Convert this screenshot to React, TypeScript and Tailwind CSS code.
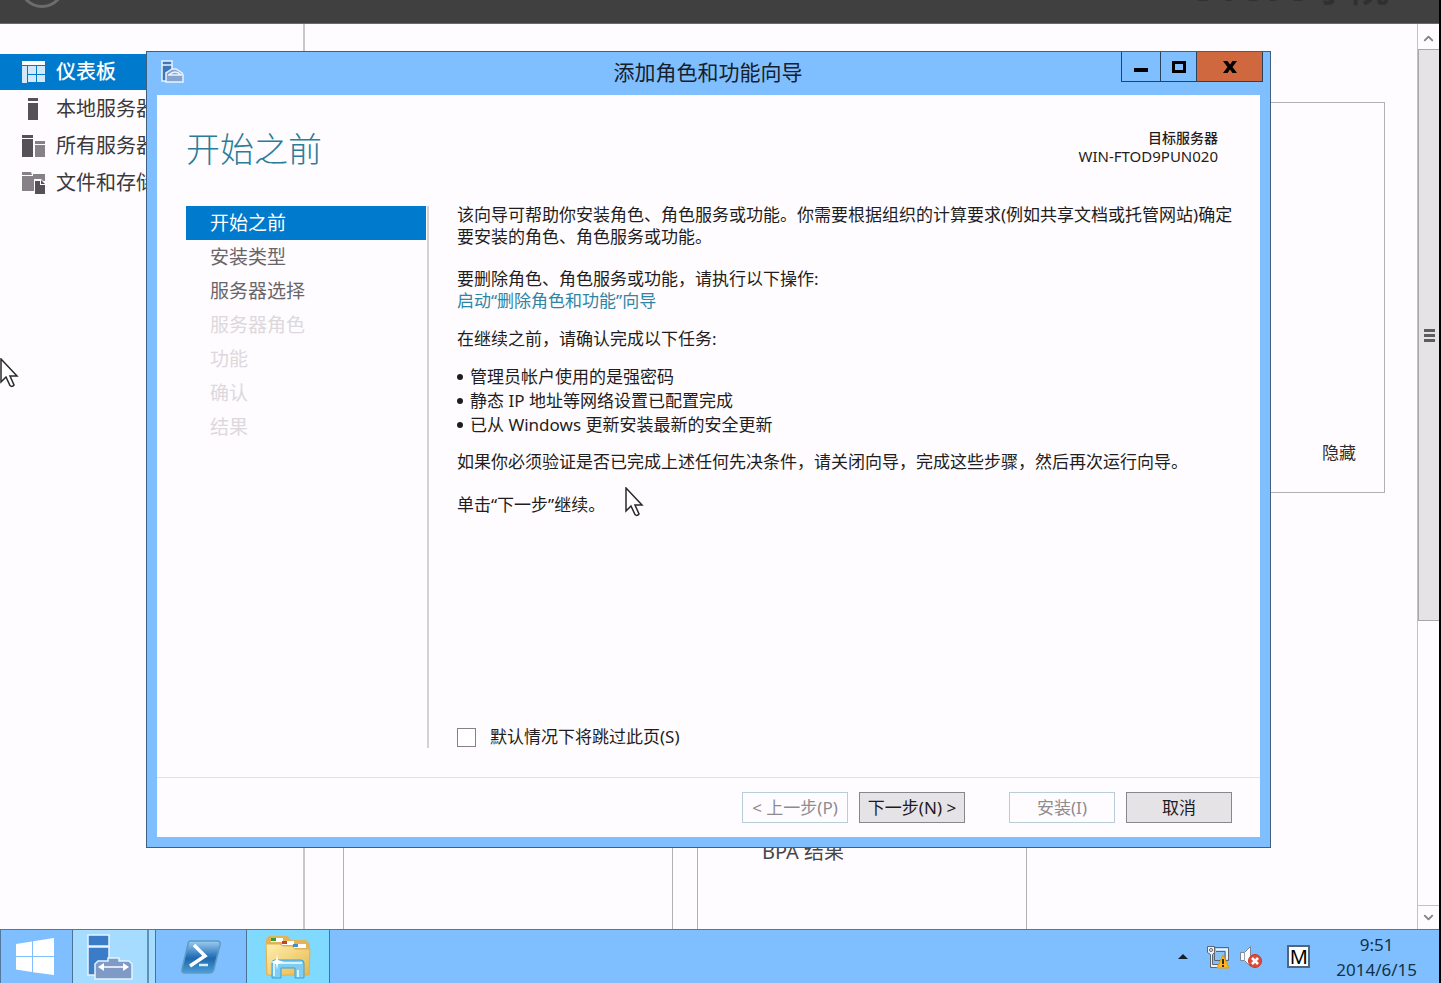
import React, { useState } from 'react';
import { ChevronDown, ChevronUp } from 'lucide-react';
import clsx from 'clsx';

type StepState = 'active' | 'ready' | 'disabled';

const steps: { label: string; state: StepState }[] = [
  { label: '开始之前', state: 'active' },
  { label: '安装类型', state: 'ready' },
  { label: '服务器选择', state: 'ready' },
  { label: '服务器角色', state: 'disabled' },
  { label: '功能', state: 'disabled' },
  { label: '确认', state: 'disabled' },
  { label: '结果', state: 'disabled' },
];

const tasks = [
  '管理员帐户使用的是强密码',
  '静态 IP 地址等网络设置已配置完成',
  '已从 Windows 更新安装最新的安全更新',
];

const DashboardIcon = () => (
  <svg width="24" height="24" viewBox="0 0 24 24" fill="#d3e9fb">
    <path fill="#fff" d="M1 1h23v4H1z" />
    <path d="M1 6h5v17H1zM7 6h8v8H7zM16 6h8v8h-8zM7 15h8v7H7zM16 15h8v7h-8z" />
  </svg>
);

const LocalServerIcon = () => (
  <svg width="24" height="24" viewBox="0 0 24 24" fill="#555156">
    <path d="M7 1h10v3H7zM7 6h10v17H7z" />
  </svg>
);

const AllServersIcon = () => (
  <svg width="24" height="24" viewBox="0 0 24 24">
    <path fill="#555156" d="M1 1h11v3H1zM1 5h11v18H1z" />
    <path fill="#858186" d="M14 7h10v3H14zM14 11h10v12H14z" />
  </svg>
);

const FilesIcon = () => (
  <svg width="24" height="24" viewBox="0 0 24 24">
    <path fill="#858186" d="M1 1h9l1 3H1zM1 5h11V3h12v7h-2l-2-2h-7v12H1z" />
    <path fill="#555156" d="M14 10h5v4h5v9H14zM20 9l4 4h-4z" />
  </svg>
);

const navItems = [
  { label: '仪表板', icon: <DashboardIcon />, active: true },
  { label: '本地服务器', icon: <LocalServerIcon /> },
  { label: '所有服务器', icon: <AllServersIcon /> },
  { label: '文件和存储服务', icon: <FilesIcon /> },
];

// Server tower with a toolbox in front
const ServerManagerIcon = () => (
  <svg width="46" height="46" viewBox="0 0 46 46" stroke="#e4f3ff" strokeWidth="1.500">
    <path fill="#3a7cc8" d="M1 1h21v11H1zM1 13h21v28H1z" />
    <path fill="#7f9ac6" d="M21 27v-3h11v3h10l3 3v15H8V30l3-3z" />
    <path fill="none" stroke="#fff" d="M14 33h25" />
    <path fill="#fff" stroke="none" d="M11 33l6-4v8zM42 33l-6-4v8z" />
  </svg>
);

const TitleIcon = () => (
  <svg width="24" height="24" viewBox="0 0 24 24" stroke="#e8f4ff" strokeWidth="1.500">
    <path fill="#3f76ba" d="M2 1h10v4H2zM2 5h10v16H2z" />
    <path fill="#86a4d0" d="M6 22v-9l6-4h4l6 4 1 2v7z" />
    <path fill="none" d="M9 15c4-4 8-4 12 0M8 15h14" />
  </svg>
);

const WindowsLogo = () => (
  <svg width="40" height="38" viewBox="0 0 40 38" fill="#fff" className="-ml-1">
    <path d="M1 6l16-2.500V18H1zM18 3.200L39 0v18H18zM1 19h16v15L1 31.500zM18 19h21v18l-21-2.800z" />
  </svg>
);

const PowerShellIcon = () => (
  <svg width="42" height="36" viewBox="0 0 42 36">
    <defs>
      <linearGradient id="ps" x1="0" y1="0" x2="0" y2="1">
        <stop offset="0" stopColor="#9dcdf0" />
        <stop offset="0.450" stopColor="#2f78bd" />
        <stop offset="0.550" stopColor="#1f68ad" />
        <stop offset="1" stopColor="#4a9fd8" />
      </linearGradient>
    </defs>
    <path fill="url(#ps)" stroke="#5b9cc4" strokeWidth="1.500" d="M10 2h27q4 0 3 4l-6 24q-1 4-5 4H5q-4 0-3-4L8 5q.5-3 2-3z" />
    <path fill="none" stroke="#fff" strokeWidth="3.500" d="M14 6l11 11-15 10" />
    <path stroke="#d6ecfa" strokeWidth="2.500" d="M19 26h9" />
  </svg>
);

const ExplorerIcon = () => (
  <svg width="48" height="46" viewBox="0 0 48 46">
    <defs>
      <linearGradient id="folder" x1="0" y1="0" x2="1" y2="1">
        <stop offset="0" stopColor="#fff0b0" />
        <stop offset="1" stopColor="#e5b84c" />
      </linearGradient>
    </defs>
    <path fill="#e2b458" d="M2 5l3-3h19l3 4h15l4 4v30H2z" />
    <path fill="#fff" d="M7 4h12v4H7zM18 7h12v4H18zM29 10h13v4H29z" />
    <path fill="#2f9e35" d="M7 4h5v3H7z" />
    <path fill="#c8402c" d="M18 7h5v3h-5z" />
    <path fill="#3f8fd0" d="M29 10h5v3h-5z" />
    <path fill="url(#folder)" stroke="#e0b050" d="M2 10h14l3 2h9l3 3h15l-1 26H3z" />
    <path fill="#7ecdf5" stroke="#3f9fd8" d="M8 29q0-3 3-3h26q3 0 3 3v15h-9V34H17v10H8z" />
    <path stroke="#d6f3ff" strokeWidth="2" d="M10 29h28M10 29v13M34 36v7" />
    <path fill="#fff" d="M13 20l1 6 6 2-6 2-1 6-1-6-5-2 5-2z" />
  </svg>
);

const NetworkIcon = () => (
  <svg width="24" height="24" viewBox="0 0 24 24">
    <path fill="#8cc2f0" stroke="#5c6470" d="M8.500 2.500h14v13h-14z" />
    <path fill="none" stroke="#eef4fa" strokeWidth="2" d="M10 4.500h11v10" />
    <path fill="none" stroke="#5c6470" d="M10 6.500h9v8" />
    <path fill="#eef2f6" stroke="#5c6470" d="M1.500 1.500h7v6l-2 2v10h8v3h-10v-13l-3-2z" />
    <circle cx="5" cy="5" r="1.500" fill="none" stroke="#5c6470" />
    <path fill="#ffb91c" stroke="#e09a10" d="M17 10l6 13H11z" />
    <path fill="#3a2b05" d="M16 14h2v5h-2zM16 20h2v2h-2z" />
  </svg>
);

const MutedIcon = () => (
  <svg width="24" height="24" viewBox="0 0 24 24">
    <path fill="#fafbfc" stroke="#7d8794" d="M1.500 7.500h4l6-6v20l-6-6h-4z" />
    <path stroke="#9aa3ae" d="M5.500 8v8" />
    <circle cx="16" cy="16" r="6.500" fill="#e04a38" stroke="#c23a2c" />
    <path stroke="#fff" strokeWidth="2.500" d="M13 13l6 6M19 13l-6 6" />
  </svg>
);

const MouseCursor = () => (
  <svg width="20" height="32" viewBox="0 0 20 32">
    <path
      fill="#fff"
      stroke="#2a282b"
      strokeWidth="1.500"
      d="M1 1v23l5-5 4 8.500q2 2 4-.5L10 18h7z"
    />
  </svg>
);

const WizardButton = ({ label, disabled }: { label: string; disabled?: boolean }) => (
  <button
    type="button"
    disabled={disabled}
    className={clsx(
      'flex h-[31px] w-[106px] items-center justify-center whitespace-nowrap border text-[17px] leading-5',
      disabled
        ? 'border-[#b9cdd6] bg-[#fefcff] text-[#8f8b90]'
        : 'border-[#8a878c] bg-[#e6e3e7] text-[#1c1b1d]'
    )}
  >
    {label}
  </button>
);

const Sidebar = () => (
  <nav className="w-[305px] shrink-0 border-r-2 border-[#cac7cb] pt-[30px]">
    <ul className="flex flex-col gap-px">
      {navItems.map((item) => (
        <li key={item.label}>
          <a
            href="#"
            className={clsx(
              'flex h-9 items-center gap-[11px] pl-[21px] text-[20px] leading-6',
              item.active ? 'bg-[#007acc] font-medium text-white' : 'text-[#3b393c]'
            )}
          >
            {item.icon}
            {item.label}
          </a>
        </li>
      ))}
    </ul>
  </nav>
);

const Scrollbar = () => (
  <div className="flex w-[22px] shrink-0 flex-col border-l border-[#c4c1c5] pt-[3px]">
    <button type="button" aria-label="向上滚动" className="flex h-[22px] items-center justify-center text-[#858186]">
      <ChevronUp size={15} strokeWidth={3} />
    </button>
    <div className="flex h-[572px] flex-col items-center justify-center gap-[2px] border border-r-0 border-[#aaa7ab] bg-[#e6e3e7]">
      <span className="h-[3px] w-[11px] bg-[#5f5c60]" />
      <span className="h-[3px] w-[11px] bg-[#5f5c60]" />
      <span className="h-[3px] w-[11px] bg-[#5f5c60]" />
    </div>
    <div className="flex-1" />
    <button type="button" aria-label="向下滚动" className="flex h-6 items-center justify-center border-t border-[#c4c1c5] text-[#858186]">
      <ChevronDown size={15} strokeWidth={3} />
    </button>
  </div>
);

const Dashboard = () => (
  <main className="flex min-w-0 flex-1 flex-col pt-[78px] pr-8 pl-[38px]">
    <section className="flex h-[391px] items-end justify-end border border-[#b3b0b4] pr-7 pb-[27px]">
      <button type="button" className="text-[17px] leading-6 text-[#2f2d30]">
        隐藏
      </button>
    </section>
    <div className="mt-32 flex flex-1 gap-6">
      <section className="w-[330px] border border-b-0 border-[#b3b0b4]" />
      <section className="w-[330px] border border-b-0 border-[#b3b0b4] pt-[218px] pl-16 text-[20px] leading-6 text-[#49464a]">
        BPA 结果
      </section>
    </div>
  </main>
);

const Wizard = () => {
  const [skip, setSkip] = useState(false);

  return (
    <div
      role="dialog"
      aria-labelledby="wizard-title"
      className="absolute top-[27px] right-[168px] bottom-[81px] left-[146px] flex flex-col border border-[#3e5f80] bg-[#80bfff] px-[10px] pb-[10px]"
    >
      <div className="relative flex h-[43px] shrink-0 items-center pb-1">
        <div className="pl-[3px]">
          <TitleIcon />
        </div>
        <h1 id="wizard-title" className="flex-1 pr-7 text-center text-[21px] leading-7 text-[#16202c]">
          添加角色和功能向导
        </h1>
        <div className="absolute top-0 -right-[3px] flex h-[30px] border border-t-0 border-[#27425e]">
          <button type="button" aria-label="最小化" className="flex w-[39px] items-center justify-center border-r border-[#27425e]">
            <svg width="14" height="14" viewBox="0 0 14 14">
              <path d="M0 8h14v4H0z" />
            </svg>
          </button>
          <button type="button" aria-label="最大化" className="flex w-9 items-center justify-center border-r border-[#27425e]">
            <svg width="14" height="12" viewBox="0 0 14 12">
              <path fill="none" stroke="#000" strokeWidth="3" d="M1.500 1.500h11v9h-11z" />
            </svg>
          </button>
          <button type="button" aria-label="关闭" className="flex w-[65px] items-center justify-center bg-[#d0683f]">
            <svg width="14" height="12" viewBox="0 0 14 12">
              <path d="M0 0h4.500L7 3.500 9.500 0H14L9.500 6l4.500 6H9.500L7 8.500 4.500 12H0l4.500-6z" />
            </svg>
          </button>
        </div>
      </div>

      <div className="flex flex-1 flex-col bg-[#fefcff]">
        <header className="flex justify-between pt-[34px] pr-[42px] pb-[35px] pl-[29px]">
          <h2 className="text-[34px] leading-10 font-light text-[#2b7c98]">开始之前</h2>
          <div className="text-right text-[#1f1d20]">
            <p className="text-[14px] leading-[18px] font-medium">目标服务器</p>
            <p className="text-[15px] leading-[18px]">WIN-FTOD9PUN020</p>
          </div>
        </header>

        <div className="flex flex-1 pb-[29px] pl-[29px]">
          <nav className="mt-[2px] w-[243px] shrink-0 border-r-2 border-[#d5d2d6] pr-px">
            <ol>
              {steps.map((step) => (
                <li
                  key={step.label}
                  className={clsx('h-[34px] pl-[24px] text-[19px] leading-[34px]', {
                    'bg-[#007acc] text-white': step.state === 'active',
                    'text-[#69666a]': step.state === 'ready',
                    'text-[#dcd8dc]': step.state === 'disabled',
                  })}
                >
                  {step.label}
                </li>
              ))}
            </ol>
          </nav>

          <div className="flex flex-1 flex-col pr-6 pl-7 text-[17px] leading-[22px] text-[#1f1d20]">
            <p>
              该向导可帮助你安装角色、角色服务或功能。你需要根据组织的计算要求(例如共享文档或托管网站)确定要安装的角色、角色服务或功能。
            </p>
            <p className="mt-5">
              要删除角色、角色服务或功能，请执行以下操作:
              <br />
              <a href="#" className="text-[#2f86a4]">
                启动“删除角色和功能”向导
              </a>
            </p>
            <p className="mt-4">在继续之前，请确认完成以下任务:</p>
            <ul className="mt-[15px] leading-6">
              {tasks.map((task) => (
                <li key={task} className="flex items-center gap-[7px]">
                  <span className="size-[6px] rounded-full bg-[#1f1d20]" />
                  {task}
                </li>
              ))}
            </ul>
            <p className="mt-[14px]">
              如果你必须验证是否已完成上述任何先决条件，请关闭向导，完成这些步骤，然后再次运行向导。
            </p>
            <p className="mt-[21px]">单击“下一步”继续。</p>

            <label className="mt-auto flex items-center gap-[14px]">
              <input
                type="checkbox"
                checked={skip}
                onChange={(e) => setSkip(e.target.checked)}
                className="size-[19px] appearance-none border border-[#858186] bg-white checked:bg-[#007acc]"
              />
              默认情况下将跳过此页(S)
            </label>
          </div>
        </div>

        <footer className="flex justify-end gap-[11px] border-t border-[#e6e0e5] pt-[14px] pr-7 pb-[14px]">
          <WizardButton label="< 上一步(P)" disabled />
          <WizardButton label="下一步(N) >" />
          <div className="ml-[33px]">
            <WizardButton label="安装(I)" disabled />
          </div>
          <WizardButton label="取消" />
        </footer>
      </div>
    </div>
  );
};

const Taskbar = () => (
  <footer className="flex h-[54px] shrink-0 border-t border-l border-[#54789c] bg-[#80bfff]">
    <button type="button" aria-label="开始" className="flex w-[71px] items-center justify-center">
      <WindowsLogo />
    </button>
    <button type="button" aria-label="服务器管理器" className="flex w-[84px] border-x border-[#4a7396] bg-[#a6dcff]">
      <span className="flex h-full flex-1 items-center justify-center border-r-2 border-[#5f91b4]">
        <ServerManagerIcon />
      </span>
      <span className="w-[6px]" />
    </button>
    <button type="button" aria-label="PowerShell" className="flex w-[90px] items-center justify-center">
      <PowerShellIcon />
    </button>
    <button type="button" aria-label="文件资源管理器" className="flex w-[84px] items-center justify-center border-x border-[#4a7396] bg-[#80daff]">
      <ExplorerIcon />
    </button>
    <div className="ml-auto flex items-center pr-[22px]">
      <svg width="10" height="5" viewBox="0 0 10 5" className="mr-[18px]">
        <path fill="#14202c" d="M5 0l5 5H0z" />
      </svg>
      <NetworkIcon />
      <span className="ml-[9px]">
        <MutedIcon />
      </span>
      <span className="ml-6 flex size-[23px] items-center justify-center border-2 border-[#54657a] bg-white text-[20px] leading-5 text-black">
        M
      </span>
      <div className="ml-[26px] text-center text-[17px] leading-[25px] text-[#123248]">
        <p>9:51</p>
        <p>2014/6/15</p>
      </div>
    </div>
  </footer>
);

export default function App() {
  return (
    <div className="flex h-screen flex-col overflow-hidden border-r-2 border-black bg-[#fefcff] font-['Noto_Sans','Noto_Sans_CJK_SC',sans-serif]">
      <div className="flex h-6 shrink-0 items-end justify-between overflow-hidden border-b border-[#6a686b] bg-[#404040] pr-[50px] pb-[15px] pl-[19px]">
        <span className="size-[46px] shrink-0 rounded-full border-[3px] border-[#6c6c6c]" />
        <span className="shrink-0 pb-[5px] text-[38px] leading-[34px] font-bold text-[#303030]">51CTO学院</span>
      </div>
      <div className="relative flex min-h-0 flex-1">
        <Sidebar />
        <Dashboard />
        <Scrollbar />
        <Wizard />
        <div className="pointer-events-none absolute top-[463px] left-[625px]">
          <MouseCursor />
        </div>
        <div className="pointer-events-none absolute top-[334px] left-0">
          <MouseCursor />
        </div>
      </div>
      <Taskbar />
    </div>
  );
}
